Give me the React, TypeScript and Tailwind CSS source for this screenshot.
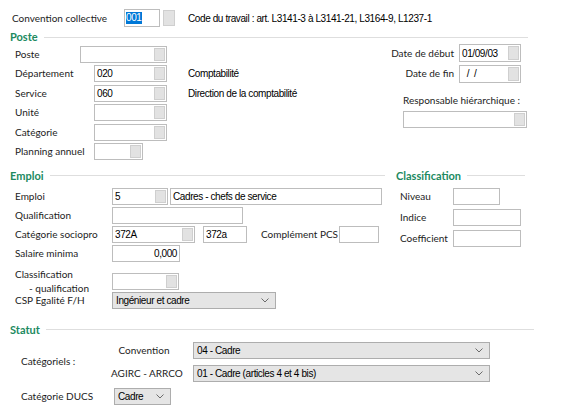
import React from 'react';

const LBL = "font-['Lato',sans-serif] text-[10px] text-[#1c1c1c] whitespace-nowrap";
const VAL = "font-['Liberation_Sans',Arial,sans-serif] text-[10px] text-black tracking-[-0.4px] whitespace-pre";

const Dots = () => (
    <div className="w-full h-full bg-[#e2e2e2] border border-[#cfcfcf]" />
);

const Box = ({
    w,
    h = 17,
    btn = false,
    value,
    right = false,
}: {
    w: number;
    h?: number;
    btn?: boolean;
    value?: string;
    right?: boolean;
}) => (
    <div
        className="flex items-stretch border border-[#bdbdbd] bg-white shrink-0"
        style={{ width: w, height: h }}
    >
        <div className={`flex-1 flex items-center px-[2px] ${right ? 'justify-end' : ''} ${VAL}`}>{value}</div>
        {btn && (
            <div className="w-[13px] p-[1px]">
                <Dots />
            </div>
        )}
    </div>
);

const Select = ({ w, value }: { w: number; value: string }) => (
    <div
        className="flex items-center justify-between h-[17px] border border-[#adadad] bg-[#e5e5e5] pl-[3px] pr-[6px] shrink-0"
        style={{ width: w }}
    >
        <span className={VAL}>{value}</span>
        <svg width="8" height="5" viewBox="0 0 8 5">
            <path d="M0.5 0.5 L4 4 L7.5 0.5" fill="none" stroke="#6b6b6b" strokeWidth="1" />
        </svg>
    </div>
);

const Header = ({ title, className = '' }: { title: string; className?: string }) => (
    <div className={`flex items-center h-[12px] ${className}`}>
        <span className="font-['Lato',sans-serif] text-[11px] font-bold text-[#218a5f]">{title}</span>
        <div className="flex-1 h-px bg-[#dedede] ml-[6px]" />
    </div>
);

const Row = ({ label, lw, children }: { label: string; lw: number; children: React.ReactNode }) => (
    <div className="flex items-center h-[17px]">
        <div className={LBL} style={{ width: lw }}>{label}</div>
        {children}
    </div>
);

const App = () => {
    return (
        <div className="w-[576px] h-[411px] bg-white overflow-hidden">
            {/* convention */}
            <div className="flex items-center h-[18px] mt-[9px]">
                <div className={`${LBL} w-[124px] pl-[12px]`}>Convention collective</div>
                <div className="flex items-center w-[36px] h-[18px] border border-[#bdbdbd] px-[1px]">
                    <span className={`${VAL} bg-[#0078d7] text-white leading-[12px]`}>001</span>
                </div>
                <div className="w-[14px] h-[18px] ml-[2px] p-[1px]">
                    <Dots />
                </div>
                <div className={`${VAL} ml-[12px]`}>Code du travail : art. L3141-3 à L3141-21, L3164-9, L1237-1</div>
            </div>

            {/* poste */}
            <Header title="Poste" className="mt-[4px] ml-[10px] w-[518px]" />
            <div className="flex mt-[3px]">
                <div className="flex flex-col gap-[2.4px] pl-[15px] w-[375px]">
                    <Row label="Poste" lw={65}>
                        <Box w={87} btn />
                    </Row>
                    <Row label="Département" lw={79}>
                        <Box w={73} btn value="020" />
                        <span className={`${VAL} ml-[21px]`}>Comptabilité</span>
                    </Row>
                    <Row label="Service" lw={79}>
                        <Box w={73} btn value="060" />
                        <span className={`${VAL} ml-[21px]`}>Direction de la comptabilité</span>
                    </Row>
                    <Row label="Unité" lw={79}>
                        <Box w={73} btn />
                    </Row>
                    <Row label="Catégorie" lw={79}>
                        <Box w={73} btn />
                    </Row>
                    <Row label="Planning annuel" lw={79}>
                        <Box w={49} btn />
                    </Row>
                </div>
                <div className="flex flex-col w-[137px] ml-[28px] -mt-[2px]">
                    <div className="flex items-center justify-end pr-[19px] h-[18px]">
                        <span className={`${LBL} mr-[5px]`}>Date de début</span>
                        <Box w={62} h={18} btn value="01/09/03" />
                    </div>
                    <div className="flex items-center justify-end pr-[19px] h-[18px] mt-[2.5px]">
                        <span className={`${LBL} mr-[5px]`}>Date de fin</span>
                        <Box w={62} h={18} btn value="  /  /" />
                    </div>
                    <div className={`${LBL} mt-[11px] h-[13px] leading-[13px]`}>Responsable hiérarchique :</div>
                    <div className="mt-[4px]">
                        <Box w={124} btn />
                    </div>
                </div>
            </div>

            {/* emploi + classification */}
            <div className="flex mt-[10px]">
                <div className="ml-[10px] w-[375px]">
                    <Header title="Emploi" />
                    <div className="flex flex-col gap-[2px] pl-[5px] mt-[6px]">
                        <Row label="Emploi" lw={97}>
                            <Box w={56} btn value="5" />
                            <div className="ml-[2px]">
                                <Box w={212} value="Cadres - chefs de service" />
                            </div>
                        </Row>
                        <Row label="Qualification" lw={97}>
                            <Box w={131} />
                        </Row>
                        <Row label="Catégorie sociopro" lw={97}>
                            <Box w={83} btn value="372A" />
                            <div className="ml-[8px]">
                                <Box w={44} value="372a" />
                            </div>
                            <span className={`${LBL} ml-[14px] w-[78px]`}>Complément PCS</span>
                            <Box w={40} />
                        </Row>
                        <Row label="Salaire minima" lw={97}>
                            <Box w={68} value="0,000" right />
                        </Row>
                        <div className="flex items-start h-[26px]">
                            <div className={`${LBL} w-[97px] pt-[3px] leading-[14px]`}>
                                <div>Classification</div>
                                <div className="pl-[14px]">- qualification</div>
                            </div>
                            <div className="mt-[9px]">
                                <Box w={67} btn />
                            </div>
                        </div>
                        <Row label="CSP Egalité F/H" lw={97}>
                            <Select w={164} value="Ingénieur et cadre" />
                        </Row>
                    </div>
                </div>
                <div className="ml-[11px] w-[129px]">
                    <Header title="Classification" />
                    <div className="flex flex-col gap-[4px] pl-[4px] mt-[6px]">
                        <Row label="Niveau" lw={53}>
                            <Box w={47} />
                        </Row>
                        <Row label="Indice" lw={53}>
                            <Box w={68} />
                        </Row>
                        <Row label="Coefficient" lw={53}>
                            <Box w={68} />
                        </Row>
                    </div>
                </div>
            </div>

            {/* statut */}
            <Header title="Statut" className="mt-[15px] ml-[10px] w-[524px]" />
            <div className="flex items-center mt-[6px] pl-[21px]">
                <div className={`${LBL} w-[90px]`}>Catégoriels :</div>
                <div className="flex flex-col gap-[6px]">
                    <div className="flex items-center h-[17px]">
                        <div className={`${LBL} w-[66px] mr-[16px] text-center`}>Convention</div>
                        <Select w={297} value="04 - Cadre" />
                    </div>
                    <div className="flex items-center h-[17px]">
                        <div className={`${LBL} w-[66px] mr-[16px] text-center`}>AGIRC - ARRCO</div>
                        <Select w={297} value="01 - Cadre (articles 4 et 4 bis)" />
                    </div>
                </div>
            </div>
            <div className="flex items-center h-[17px] mt-[6px] pl-[21px]">
                <div className={`${LBL} w-[93px]`}>Catégorie DUCS</div>
                <Select w={57} value="Cadre" />
            </div>
        </div>
    );
};

export default App;
